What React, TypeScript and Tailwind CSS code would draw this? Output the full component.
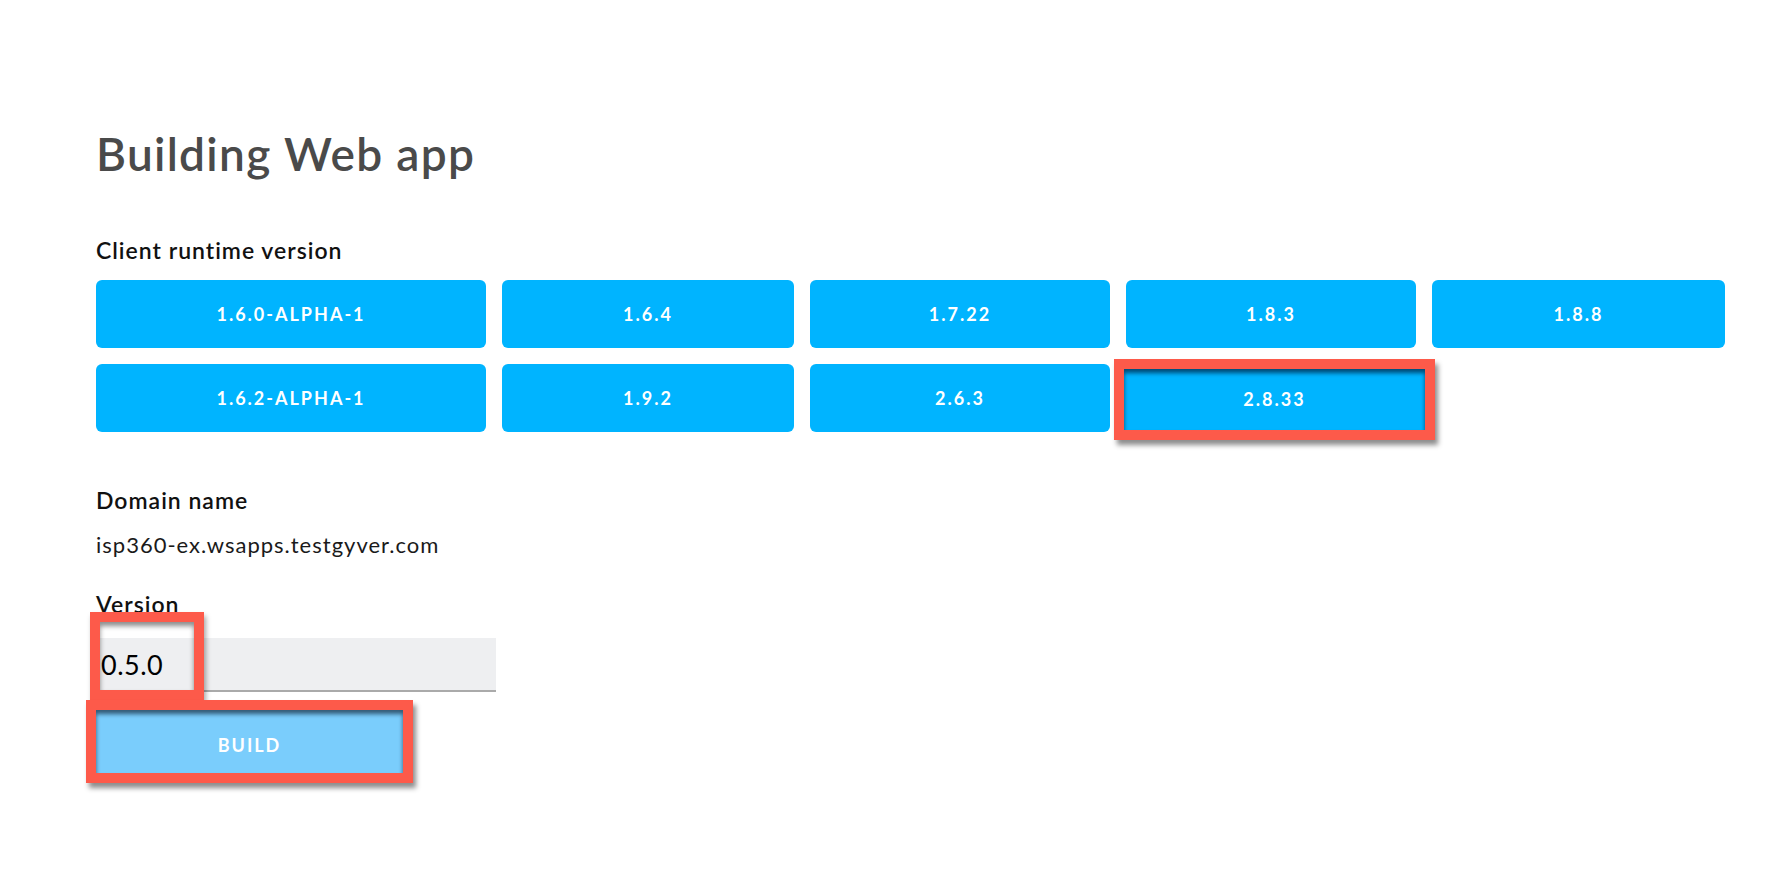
const row1 = ["1.6.0-ALPHA-1", "1.6.4", "1.7.22", "1.8.3", "1.8.8"];
const row2 = ["1.6.2-ALPHA-1", "1.9.2", "2.6.3"];

function VersionButton({ label }: { label: string }) {
  return (
    <button
      type="button"
      className="flex h-[68px] w-full items-center justify-center rounded-[6px] bg-[#00b4ff] text-[18px] font-bold tracking-[2px] text-white"
    >
      {label}
    </button>
  );
}

export default function App() {
  return (
    <div className="min-h-[870px] bg-white font-['Lato',sans-serif]">
      <div className="pl-[96px] pt-[128px]">
        <h1 className="text-[46px] font-semibold leading-[52px] tracking-[1.3px] text-[#4a4a4a]">
          Building Web app
        </h1>

        <h2 className="mt-[56px] text-[23px] font-semibold leading-[28px] tracking-[1px] text-[#111]">
          Client runtime version
        </h2>
        <div className="mt-[16px] grid grid-cols-[390px_292px_300px_290px_293px] gap-4">
          {row1.map((v) => (
            <VersionButton key={v} label={v} />
          ))}
          {row2.map((v) => (
            <VersionButton key={v} label={v} />
          ))}
          <div className="relative">
            <VersionButton label="2.8.33" />
            <div className="absolute left-[-12px] top-[-5px] flex h-[81px] w-[321px] items-center justify-center border-[10px] border-[#fd5a4a] bg-[#00b4ff] text-[18px] font-bold tracking-[2px] text-white shadow-[3px_5px_5px_rgba(0,0,0,0.45),inset_0_4px_4px_rgba(0,30,60,0.7)]">
              2.8.33
            </div>
          </div>
        </div>

        <h2 className="mt-[54px] text-[23px] font-semibold leading-[28px] tracking-[1px] text-[#111]">
          Domain name
        </h2>
        <p className="mt-[17px] text-[22px] leading-[28px] tracking-[1px] text-[#1a1a1a]">
          isp360-ex.wsapps.testgyver.com
        </p>

        <h2 className="mt-[31px] text-[23px] font-semibold leading-[28px] tracking-[1px] text-[#111]">
          Version
        </h2>
        <div className="relative mt-[20px] w-[400px]">
          <input
            readOnly
            value="0.5.0"
            className="h-[54px] w-full border-b-2 border-[#aaaaaa] bg-[#eeeff1] pl-[5px] text-[27px] tracking-[0.5px] text-black outline-none"
          />
          <div className="pointer-events-none absolute left-[-6px] top-[-26px] h-[88px] w-[114px] border-[10px] border-[#fd5a4a] shadow-[2px_4px_5px_rgba(0,0,0,0.35),inset_0_4px_5px_rgba(0,0,0,0.45)]" />
        </div>

        <div className="relative mt-[18px] w-[307px]">
          <button
            type="button"
            className="flex h-[64px] w-full items-center justify-center bg-[#7acdfc] pt-[6px] text-[18px] font-bold tracking-[2px] text-white"
          >
            BUILD
          </button>
          <div className="pointer-events-none absolute left-[-10px] top-[-10px] h-[83px] w-[327px] border-[10px] border-[#fd5a4a] shadow-[3px_5px_5px_rgba(0,0,0,0.45),inset_0_4px_4px_rgba(20,40,60,0.7)]" />
        </div>
      </div>
    </div>
  );
}
